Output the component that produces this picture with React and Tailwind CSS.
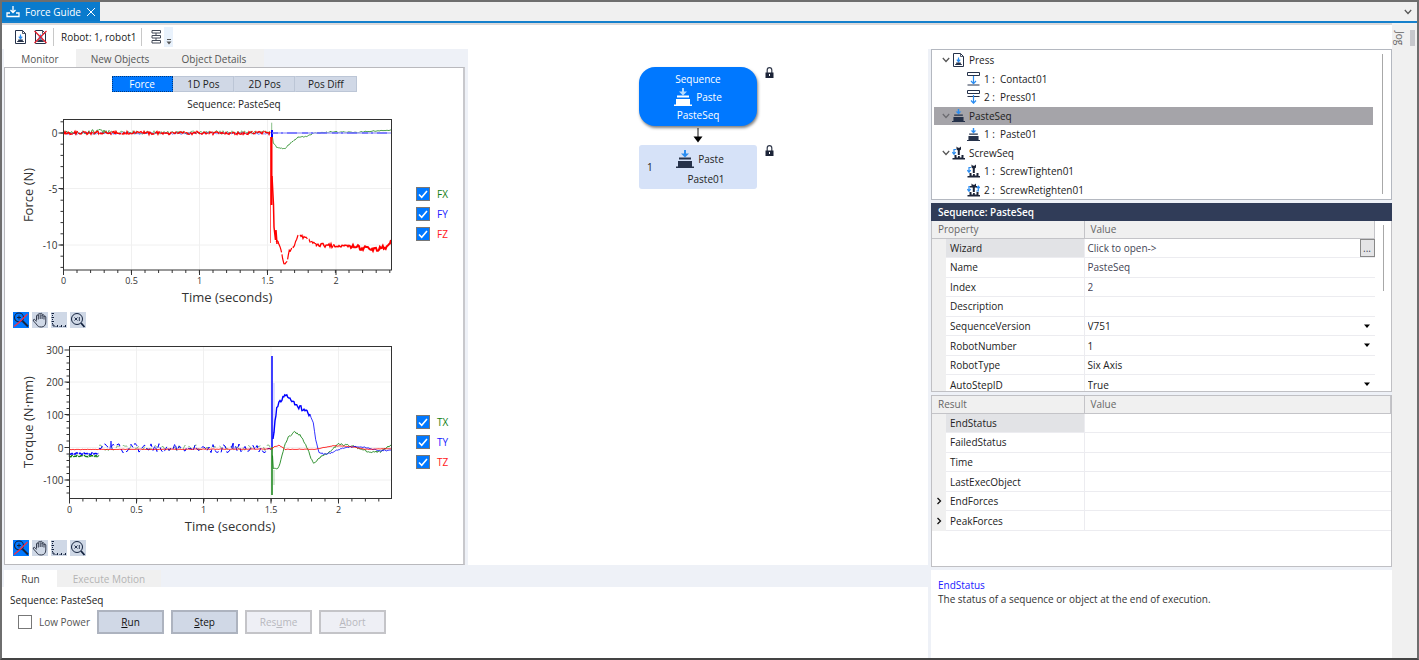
import React, { useState } from "react";

/* ---------- helpers for the charts ---------- */

function makeRandom(seed) {
  let s = seed;
  return () => {
    s = (s * 16807) % 2147483647;
    return s / 2147483647;
  };
}

function noise(x1, x2, y, amp, seed, step = 1) {
  const rnd = makeRandom(seed * 7919);
  const pts = [];
  for (let x = x1; x <= x2; x += step) pts.push(`${x},${(y + (rnd() * 2 - 1) * amp).toFixed(1)}`);
  return pts.join(" ");
}

function curve(anchors, amp, seed) {
  const rnd = makeRandom(seed * 7919);
  const pts = [];
  for (let i = 0; i < anchors.length - 1; i++) {
    const [xa, ya] = anchors[i];
    const [xb, yb] = anchors[i + 1];
    const n = Math.max(1, Math.round(Math.abs(xb - xa)));
    for (let k = 0; k < n; k++) {
      const t = k / n;
      pts.push(`${(xa + (xb - xa) * t).toFixed(1)},${(ya + (yb - ya) * t + (rnd() * 2 - 1) * amp).toFixed(1)}`);
    }
  }
  pts.push(anchors[anchors.length - 1].join(","));
  return pts.join(" ");
}

function Line({ points, color, width = 1, ...rest }) {
  return <polyline points={points} fill="none" stroke={color} strokeWidth={width} {...rest} />;
}

function range(from, to, step) {
  const out = [];
  for (let v = from; v <= to; v += step) out.push(v);
  return out;
}

function Axes({ left, right, top, bottom, xs, ys, minorX, minorY, title, titleX, unit, unitY }) {
  return (
    <g>
      <g stroke="#f0f0f0">
        {xs.slice(1).map((t) => <line key={t.label} x1={t.at} x2={t.at} y1={top} y2={bottom} />)}
        {ys.map((t) => <line key={t.label} x1={left} x2={right} y1={t.at} y2={t.at} />)}
      </g>
      <g stroke="#333">
        {xs.map((t) => <line key={t.label} x1={t.at} x2={t.at} y1={bottom} y2={bottom + 5} />)}
        {ys.map((t) => <line key={t.label} x1={left - 5} x2={left} y1={t.at} y2={t.at} />)}
        {minorX.map((x) => <line key={x} x1={x} x2={x} y1={bottom} y2={bottom + 3} />)}
        {minorY.map((y) => <line key={y} x1={left - 3} x2={left} y1={y} y2={y} />)}
      </g>
      <g fill="#333" fontSize="10">
        {xs.map((t) => <text key={t.label} x={t.at} y={bottom + 14} fontSize="9" textAnchor="middle">{t.label}</text>)}
        {ys.map((t) => <text key={t.label} x={left - 6} y={t.at + 4} textAnchor="end">{t.label}</text>)}
      </g>
      <text x={titleX} y={bottom + 32} fontSize="13" fill="#333" textAnchor="middle">{title}</text>
      <text transform={`translate(33 ${unitY}) rotate(-90)`} fontSize="13" fill="#333" textAnchor="middle">{unit}</text>
    </g>
  );
}

const RED = "#ff0000";
const BLUE = "#0000ff";
const GREEN = "#118011";

function ForceChart() {
  return (
    <svg viewBox="5 112 400 196" className="h-[196px] w-[400px] shrink-0" role="img" aria-label="Force over time">
      <Axes
        left={63.5} right={391.5} top={119.5} bottom={270}
        xs={[{ at: 63.5, label: "0" }, { at: 131.5, label: "0.5" }, { at: 199.5, label: "1" }, { at: 267.5, label: "1.5" }, { at: 336, label: "2" }]}
        ys={[{ at: 133, label: "0" }, { at: 188.5, label: "-5" }, { at: 245, label: "-10" }]}
        minorX={range(77, 391, 13.6)} minorY={range(121.8, 269, 11.2)}
        title="Time (seconds)" titleX={227} unit="Force (N)" unitY={195}
      />
      <Line points={noise(64, 110, 132, 2.6, 7)} color={GREEN} opacity="0.7" />
      <Line points={noise(110, 270, 132.5, 1.8, 8)} color={GREEN} opacity="0.5" />
      <Line points={noise(64, 270, 133.3, 1.2, 19)} color={BLUE} opacity="0.4" />
      <Line points={noise(64, 270, 133, 1.6, 31)} color={RED} width={1.4} strokeDasharray="9 1 5 1" />
      <Line points="271.7,122.7 271.7,140" color={GREEN} opacity="0.5" />
      <Line
        points={curve([[272, 134], [273.3, 143.3], [276.7, 147], [284.3, 149], [291, 142.7], [298, 137], [306.7, 136.7], [315, 132.7], [332, 132], [355, 132.5], [380, 130.7], [391, 129.7]], 0.6, 5)}
        color={GREEN} opacity="0.75"
      />
      <Line points="272,130 272,137" color={BLUE} width={2} />
      <Line points="272,133 391,133" color="#a9a9ff" width={1.6} />
      <Line points="272,133 391,133" color={BLUE} opacity="0.65" strokeDasharray="6 3 2 4 10 5" />
      <Line points="270.5,137 270.5,243" color={RED} opacity="0.65" />
      <Line points="271.5,137 271.5,205" color={RED} width={2} />
      <Line points="272,176 273.5,205 274,227 275.5,240 276,230 277,244" color={RED} width={1.5} />
      <Line
        points={curve([[276, 241], [280, 245.5], [282.7, 260], [285, 265], [287.3, 260], [289.3, 250], [293.3, 247], [296.7, 238.3], [300, 235], [304, 237.5], [310, 241.7], [316.7, 245]], 1.8, 11)}
        color={RED} width={1.2} strokeDasharray="14 2"
      />
      <Line points={curve([[316, 245], [333, 246]], 2.2, 13)} color={RED} width={1.5} />
      <Line points={curve([[333, 246], [350, 246]], 1, 17)} color={RED} width={1.5} />
      <Line points={curve([[350, 246], [363, 248.3], [377, 249.3], [386.7, 247], [391, 240]], 2.2, 23)} color={RED} width={2} />
      <rect x="63.5" y="119.5" width="328" height="150.5" fill="none" stroke="#333" />
    </svg>
  );
}

function TorqueChart() {
  return (
    <svg viewBox="5 340 400 196" className="h-[196px] w-[400px] shrink-0" role="img" aria-label="Torque over time">
      <Axes
        left={69.5} right={391.5} top={346.5} bottom={498.5}
        xs={[{ at: 69.5, label: "0" }, { at: 136.5, label: "0.5" }, { at: 203.5, label: "1" }, { at: 271, label: "1.5" }, { at: 338.5, label: "2" }]}
        ys={[{ at: 350, label: "300" }, { at: 382, label: "200" }, { at: 414.5, label: "100" }, { at: 447.5, label: "0" }, { at: 480, label: "-100" }]}
        minorX={range(82.9, 392, 13.45)} minorY={range(356.5, 498, 6.5)}
        title="Time (seconds)" titleX={230} unit="Torque (N·mm)" unitY={422}
      />
      <Line points={noise(69, 99, 456, 0.8, 3)} color={GREEN} width={1.4} strokeDasharray="5 1" />
      <Line points={noise(99, 271, 448, 3, 17, 2)} color={GREEN} opacity="0.5" strokeDasharray="5 4" />
      <Line points={noise(69, 99, 453.5, 1, 9)} color={BLUE} width={1.4} strokeDasharray="5 1" />
      <Line points={noise(99, 271, 448, 4.8, 41, 2)} color={BLUE} strokeDasharray="5 3" />
      <Line points="110,449 111,441 112,449" color={BLUE} opacity="0.7" />
      <Line points="232,449 233,443 234,449" color={BLUE} opacity="0.7" />
      <Line points="274,383 274,433" color={BLUE} opacity="0.25" />
      <Line points="274,470 274,485" color={GREEN} opacity="0.35" />
      <Line points="272,447 272,495" color={GREEN} width={1.5} />
      <Line points="272,356 272,447" color={BLUE} width={1.5} />
      <Line
        points={curve([[272.5, 455], [273.3, 468], [277.7, 469], [281, 460], [284.3, 446.7], [288.3, 437.3], [294.3, 432.3], [300, 435], [306.7, 446.7], [311, 458.3], [313.7, 463], [320, 457.3], [328.3, 453], [338.3, 444], [351.7, 446], [368.3, 451.7], [380, 451.7], [391, 445]], 0.9, 29)}
        color={GREEN} opacity="0.85"
      />
      <Line points={curve([[273, 440], [275, 420], [276.7, 408], [280, 401], [285.7, 394.5], [291, 398.3], [296.7, 405], [305, 410.7], [310, 414]], 2.4, 37)} color={BLUE} width={1.4} />
      <Line
        points={curve([[310, 414], [313.3, 423.3], [315.7, 440], [319, 451.7], [323.3, 454], [331.7, 452.7], [341.7, 448.3], [355, 446.7], [365, 447.3], [378.3, 450.7], [391, 450]], 0.8, 43)}
        color={BLUE} opacity="0.8"
      />
      <Line
        points={curve([[69, 449.5], [271, 449], [275, 446.5], [279, 445.3], [285, 449.3], [315, 449.3], [333, 445.7], [351.7, 446.7], [365, 449.3], [391, 448.7]], 0.3, 53)}
        color={RED} opacity="0.8"
      />
      <rect x="69.5" y="346.5" width="322" height="152" fill="none" stroke="#333" />
    </svg>
  );
}

/* ---------- icons ---------- */

const INK = "#26324a";
const SKY = "#2a8cf0";

function DocIcon({ crossed }) {
  return (
    <svg viewBox="0 0 13 14" className="h-[14px] w-[13px] shrink-0" fill="none">
      <path d="M1.500 .5h7l3 3v10h-10z" fill="#fff" stroke={INK} />
      <path d="M8.500 .5v3h3" stroke={INK} strokeWidth=".8" />
      <path d="M6.500 4.500v3.500M4.800 6.700l1.700 2 1.700-2" stroke={SKY} strokeWidth="1.200" />
      <path d="M4.200 9.500h4.600v1.500h1v1H3.200v-1h1z" fill={INK} />
      {crossed && <path d="M.5 1l12 12M12.500 1L.5 13" stroke="#e0202e" strokeWidth="1.300" />}
    </svg>
  );
}

function PasteIcon({ body = INK, arrow = SKY, className = "h-[13px] w-[13px]" }) {
  return (
    <svg viewBox="0 0 18 18" className={`${className} shrink-0`}>
      <path d="M8 0h2v3.500h3L9 7.500 5 3.500h3z" fill={arrow} />
      <path d="M3 7.500h12v2H3zM2 11h14v5.500h2V18H0v-1.500h2z" fill={body} />
    </svg>
  );
}

function ContactIcon({ pressing }) {
  return (
    <svg viewBox="0 0 13 14" className="h-[14px] w-[13px] shrink-0" fill="none">
      <path d="M.5 .5h12v3H.5z" stroke={INK} />
      {pressing ? <path d="M.5 6.500h12" stroke={INK} /> : <path d="M.5 13h12" stroke={INK} />}
      <path d={pressing ? "M6.500 5v8M4 10.500l2.500 2.700L9 10.500" : "M6.500 4v7.500M4 9l2.500 2.700L9 9"} stroke={SKY} strokeWidth="1.200" />
    </svg>
  );
}

function ScrewIcon({ again }) {
  return (
    <svg viewBox="0 0 13 14" className="h-[14px] w-[13px] shrink-0" fill="none">
      <path d="M4.500 .5l1.500 1.200h1.500L9 .5v3L7.800 4.500V9H5.800V4.500L4.500 3.500z" fill="#1c2438" />
      <path d="M2.500 9h2v2.500h1.500V10h1.800v1.500h1.700V9h2v3H13V13.500H.5V12h2z" fill="#1c2438" />
      <path d="M4 3.500H2v4.500M.3 6.200L2 8.300l1.700-2.100" stroke={SKY} strokeWidth="1.200" />
      {again && <path d="M9.300 8h2V3.500M9.700 5.200l1.600-2 1.600 2" stroke={SKY} strokeWidth="1.200" />}
      {again && <path d="M3 3h7v1.500H3z" fill="#1c2438" />}
    </svg>
  );
}

function LockIcon() {
  return (
    <svg viewBox="0 0 9 12" className="h-[12px] w-[9px]" fill="none">
      <path d="M2.200 6V3a2.300 2.300 0 0 1 4.600 0v3" stroke="#333b4d" strokeWidth="1.200" />
      <rect x=".5" y="5.500" width="8" height="5.500" fill="#1c2438" />
      <path d="M4.500 7v2" stroke="#fff" />
    </svg>
  );
}

function Chevron({ muted }) {
  return (
    <svg viewBox="0 0 8 6" className="h-[6px] w-[8px]" fill="none">
      <path d="M.8 1l3.200 3.500L7.200 1" stroke={muted ? "#6b6b70" : "#555"} strokeWidth="1.200" />
    </svg>
  );
}

const toolIcons = {
  Zoom: (
    <>
      <circle cx="6" cy="5.500" r="4.500" stroke="#14233f" strokeWidth="1.100" />
      <path d="M6 3.500v4M4 5.500h4" stroke="#14233f" />
      <path d="M9.500 9l5.500 5.500" stroke="#14233f" strokeWidth="2" />
      <path d="M1 14.500L6 10.500 14.500 2" stroke="#f0304a" strokeWidth="1.300" />
    </>
  ),
  Pan: (
    <path
      d="M4.500 8.500V4c0-1.300 1.800-1.300 1.800 0V2.500c0-1.300 1.900-1.300 1.900 0v-.3c0-1.300 1.900-1.300 1.900 0V3.500c0-1.200 1.900-1.200 1.900 0V5c0-1.200 1.800-1.200 1.800 0v5c0 3-1.700 5-4.500 5-2.600 0-4-1-5-3L1.500 9c-.8-1.500.8-2.200 1.600-1.200l1.400 1.700M6.300 4v3.500M8.200 3v4M10.100 3v4M12 4.500v3"
      stroke="#333b4d"
    />
  ),
  "Reset axes": (
    <path d="M.5 1.500h2.500M.5 5.500h2.500M.5 9.500h2.500M1 13h2v2M6.500 13v2M10.500 13v2M14.500 13v2M1.500 3v1M1.500 7v1M1.500 11v1M4.500 14.500h1M8.500 14.500h1M12.500 14.500h1" stroke="#14233f" />
  ),
  "Actual size": (
    <>
      <circle cx="7" cy="7" r="5.500" stroke="#14233f" />
      <path d="M4.500 5.500l3 3M7.500 5.500l-3 3M9.300 5v4" stroke="#14233f" strokeWidth=".9" />
      <path d="M11 11l3.500 4" stroke="#14233f" strokeWidth="1.800" />
    </>
  ),
};

/* ---------- small parts ---------- */

function Check({ id, label, color, defaultChecked = true }) {
  return (
    <div className="flex h-5 items-center gap-[7px]">
      <span className="grid h-[14px] w-[14px]">
        <input
          id={id}
          type="checkbox"
          defaultChecked={defaultChecked}
          className="peer col-start-1 row-start-1 h-[14px] w-[14px] appearance-none border border-[#777] bg-white checked:bg-[#0078ff]"
        />
        <svg viewBox="0 0 14 14" className="pointer-events-none invisible col-start-1 row-start-1 peer-checked:visible" fill="none">
          <path d="M3 7.500l2.700 2.700L11 4" stroke="#fff" strokeWidth="1.600" />
        </svg>
      </span>
      <label htmlFor={id} className={color}>{label}</label>
    </div>
  );
}

function ChartBlock({ name, chart, channels }) {
  return (
    <section aria-label={name}>
      <div className="flex items-center">
        {chart}
        <div className="ml-[11px] flex flex-col pt-2">
          {channels.map((c) => (
            <Check key={c} id={c} label={c} color={c[1] === "X" ? "text-[#118011]" : c[1] === "Y" ? "text-[#2020ff]" : "text-[#ff2020]"} />
          ))}
        </div>
      </div>
      <div className="mt-1 ml-2 flex gap-[3px]">
        {Object.entries(toolIcons).map(([tool, art], i) => (
          <button key={tool} aria-label={tool} className={`h-4 w-4 ${i === 0 ? "bg-[#0078ff]" : "bg-[#cfd8e6]"}`}>
            <svg viewBox="0 0 16 16" className="h-4 w-4" fill="none">{art}</svg>
          </button>
        ))}
      </div>
    </section>
  );
}

function LeftPane() {
  const [view, setView] = useState("Force");
  return (
    <div className="flex w-[466px] shrink-0 flex-col bg-[#eef1f7] pr-[3px] pl-[2px]">
      <div role="tablist" className="flex h-[18px] text-[#555]">
        <button role="tab" aria-selected="true" className="w-[72px] bg-white pt-[2px]">Monitor</button>
        <button role="tab" aria-selected="false" className="w-[88px] bg-[#f0f0f0] pt-[2px]">New Objects</button>
        <button role="tab" aria-selected="false" className="w-[100px] bg-[#f0f0f0] pt-[2px]">Object Details</button>
      </div>
      <div className="border border-r-2 border-[#b9b9bd] border-r-[#c8c8cc] bg-white pb-2">
        <div className="mx-auto mt-2 flex w-[245px]">
          {["Force", "1D Pos", "2D Pos", "Pos Diff"].map((v) => (
            <button
              key={v}
              onClick={() => setView(v)}
              className={`h-4 flex-1 border leading-none ${v === view ? "border-dotted border-[#003a80] bg-[#0078ff] text-white" : "border-[#bcc6d6] border-l-transparent bg-[#d0d8e6] text-[#222]"}`}
            >
              {v}
            </button>
          ))}
        </div>
        <p className="h-5 pt-1 text-center leading-4">Sequence: PasteSeq</p>
        <ChartBlock name="Force" chart={<ForceChart />} channels={["FX", "FY", "FZ"]} />
        <div className="h-3" />
        <ChartBlock name="Torque" chart={<TorqueChart />} channels={["TX", "TY", "TZ"]} />
      </div>
    </div>
  );
}

function FlowCanvas() {
  return (
    <div className="flex flex-1 flex-col items-center bg-white pt-[18px]">
      <div className="relative">
        <div className="flex h-[59px] w-[118px] flex-col items-center justify-center rounded-2xl bg-[#0078ff] text-white shadow-[1px_2px_3px_rgba(0,0,0,0.5)]">
          <span className="leading-[18px]">Sequence</span>
          <span className="flex h-[18px] items-center gap-1">
            <PasteIcon body="#fff" arrow="#b5dcff" className="h-[18px] w-[18px]" />
            Paste
          </span>
          <span className="leading-[18px]">PasteSeq</span>
        </div>
        <span className="absolute top-0 left-full ml-2"><LockIcon /></span>
      </div>
      <svg viewBox="0 0 10 15" className="my-0.5 h-[15px] w-[10px]">
        <path d="M5 0v10" stroke="#111" />
        <path d="M.5 8.500h9L5 14.500z" fill="#000" />
      </svg>
      <div className="relative">
        <div className="flex h-[44px] w-[118px] items-center rounded-[3px] bg-[#d6e2f8] pl-2 text-[#222]">
          <span className="w-2">1</span>
          <div className="flex flex-1 flex-col items-center pt-1">
            <span className="flex h-5 items-center gap-1 pr-3">
              <PasteIcon className="h-[18px] w-[18px]" />
              Paste
            </span>
            <span className="leading-5">Paste01</span>
          </div>
        </div>
        <span className="absolute top-0 left-full ml-2"><LockIcon /></span>
      </div>
    </div>
  );
}

function RunPane() {
  const btn = "h-6 w-[67px] border-2";
  const on = "border-[#adb3bf] bg-[#d0d8e6] text-[#111]";
  const off = "border-[#c4c4c8] bg-[#eeeff5] text-[#b8b8be]";
  return (
    <div className="flex flex-1 flex-col">
      <div role="tablist" className="flex h-[22px] items-end bg-[#eef1f7] pl-[2px]">
        <button role="tab" aria-selected="true" className="h-[17px] w-[53px] bg-white text-[#444]">Run</button>
        <button role="tab" aria-selected="false" disabled className="h-[17px] w-[104px] bg-[#f0f0f0] text-[#b4b4b4]">Execute Motion</button>
      </div>
      <div className="flex-1 bg-white pt-[5px] pl-2">
        <p className="leading-4">Sequence: PasteSeq</p>
        <div className="mt-[2px] flex items-center gap-[7px] pl-2">
          <Check id="low-power" label="Low Power" color="text-[#555]" defaultChecked={false} />
          <button className={`${btn} ${on}`}><u>R</u>un</button>
          <button className={`${btn} ${on}`}><u>S</u>tep</button>
          <button disabled className={`${btn} ${off}`}>Res<u>u</u>me</button>
          <button disabled className={`${btn} ${off}`}><u>A</u>bort</button>
        </div>
      </div>
    </div>
  );
}

const treeRows = [
  { icon: <DocIcon />, name: "Press" },
  { icon: <ContactIcon />, no: "1 :", name: "Contact01" },
  { icon: <ContactIcon pressing />, no: "2 :", name: "Press01" },
  { icon: <PasteIcon />, name: "PasteSeq", selected: true },
  { icon: <PasteIcon />, no: "1 :", name: "Paste01" },
  { icon: <ScrewIcon />, name: "ScrewSeq" },
  { icon: <ScrewIcon />, no: "1 :", name: "ScrewTighten01" },
  { icon: <ScrewIcon again />, no: "2 :", name: "ScrewRetighten01" },
];

function Tree() {
  return (
    <div className="flex h-[151px] border border-[#b4b8c0] bg-white pt-px pl-[2px]">
      <ul role="tree" className="flex flex-1 flex-col">
        {treeRows.map((r) => (
          <li
            key={r.name}
            role="treeitem"
            aria-selected={!!r.selected}
            className={`flex flex-1 items-center ${r.no ? "pl-[33px]" : "pl-2"} ${r.selected ? "bg-[#a5a4a9]" : ""}`}
          >
            {!r.no && <button aria-label={`Collapse ${r.name}`} className="mr-[2px]"><Chevron muted={r.selected} /></button>}
            {r.icon}
            {r.no && <span className="ml-1 w-4 whitespace-nowrap">{r.no}</span>}
            <span className={r.no ? "" : "ml-1"}>{r.name}</span>
          </li>
        ))}
      </ul>
      <div className="w-4 px-[9px] pt-[3px]"><div className="h-[140px] w-px bg-[#a8a8a8]" /></div>
    </div>
  );
}

const properties = [
  { name: "Wizard", value: "Click to open->", kind: "wizard" },
  { name: "Name", value: "PasteSeq", kind: "input" },
  { name: "Index", value: "2", kind: "input" },
  { name: "Description", value: "", kind: "input" },
  { name: "SequenceVersion", value: "V751", kind: "select" },
  { name: "RobotNumber", value: "1", kind: "select" },
  { name: "RobotType", value: "Six Axis", kind: "text" },
  { name: "AutoStepID", value: "True", kind: "select" },
];

function PropertyValue({ row }) {
  if (row.kind === "wizard")
    return (
      <div className="flex items-center justify-between text-[#445]">
        {row.value}
        <button aria-label="Open wizard" className="h-[18px] w-[15px] border border-[#888] bg-[#e4e4e6] leading-none">...</button>
      </div>
    );
  if (row.kind === "input")
    return <input id={row.name} defaultValue={row.value} className="block w-full bg-transparent text-[#445] outline-none" />;
  if (row.kind === "select")
    return (
      <div className="flex items-center pr-1">
        <select id={row.name} className="flex-1 appearance-none bg-transparent outline-none"><option>{row.value}</option></select>
        <svg viewBox="0 0 8 5" className="h-[5px] w-[8px]"><path d="M1 0.500h6L4 4z" fill="#000" /></svg>
      </div>
    );
  return row.value;
}

function Head({ left, right }) {
  return (
    <thead>
      <tr className="h-[17px] border-b border-[#c4c4c8] bg-[#f0f0f0] text-left text-[#666]">
        <th colSpan={2} className="w-[152px] border-r border-[#c4c4c8] p-0 pl-[6px] font-normal">{left}</th>
        <th className="border-r border-[#c4c4c8] p-0 pl-[6px] font-normal">{right}</th>
      </tr>
    </thead>
  );
}

const results = ["EndStatus", "FailedStatus", "Time", "LastExecObject", "EndForces", "PeakForces"];

function RightPane() {
  return (
    <div className="flex w-[464px] shrink-0 flex-col bg-[#eef1f7] pl-[3px]">
      <Tree />
      <h2 className="mt-[3px] h-[18px] bg-[#303c58] pl-[7px] leading-[18px] font-semibold text-white">Sequence: PasteSeq</h2>
      <div className="flex h-[171px] overflow-hidden border border-t-0 border-[#c0c0c4] bg-white">
        <table className="h-[174px] flex-1 table-fixed border-collapse">
          <colgroup><col className="w-[14px]" /><col className="w-[138px]" /><col /></colgroup>
          <Head left="Property" right="Value" />
          <tbody>
            {properties.map((r, i) => (
              <tr key={r.name}>
                <td className="h-[19px] bg-[#f0f0f0] p-0" />
                <td className={`border-r border-b border-[#ececf0] p-0 pl-1 ${i === 0 ? "bg-[#e2e3e6]" : ""}`}>
                  {r.kind === "input" || r.kind === "select" ? <label htmlFor={r.name}>{r.name}</label> : r.name}
                </td>
                <td className="border-b border-[#ececf0] p-0 pl-[3px]"><PropertyValue row={r} /></td>
              </tr>
            ))}
          </tbody>
        </table>
        <div className="w-[14px] px-2 pt-1"><div className="h-[66px] w-px bg-[#a8a8a8]" /></div>
      </div>
      <div className="mt-[3px] h-[172px] border border-[#c0c0c4] bg-white">
        <table className="h-[135px] w-full table-fixed border-collapse">
          <colgroup><col className="w-[14px]" /><col className="w-[138px]" /><col /></colgroup>
          <Head left="Result" right="Value" />
          <tbody>
            {results.map((name, i) => (
              <tr key={name}>
                <td className="h-[19px] bg-[#f0f0f0] p-0">
                  {i > 3 && (
                    <button aria-label={`Expand ${name}`} className="ml-1 block">
                      <svg viewBox="0 0 6 8" className="h-2 w-[6px]" fill="none"><path d="M1.500 1L4.500 4l-3 3" stroke="#111" strokeWidth="1.300" /></svg>
                    </button>
                  )}
                </td>
                <td className={`border-r border-b border-[#ececf0] p-0 pl-1 ${i === 0 ? "bg-[#e2e3e6]" : ""}`}>{name}</td>
                <td className="border-b border-[#ececf0] p-0" />
              </tr>
            ))}
          </tbody>
        </table>
      </div>
      <div className="mt-[3px] flex-1 bg-white pt-2 pl-[7px] leading-[14px]">
        <p className="text-[#2020ff]">EndStatus</p>
        <p className="text-[#333]">The status of a sequence or object at the end of execution.</p>
      </div>
    </div>
  );
}

export default function App() {
  return (
    <div className="flex min-h-screen flex-col border-2 border-[#6e6e6e] border-b-[#444] bg-[#f0f0f0] font-['Open_Sans','Noto_Sans',sans-serif] text-[10px] leading-4 text-[#222]">
      <header className="flex h-[21px] items-center justify-between border-b-2 border-[#1580cc]">
        <div className="flex h-full w-[98px] items-center bg-[#0a7bcd] pt-px pl-1 text-white">
          <svg viewBox="0 0 14 12" className="h-3 w-[14px]" fill="none">
            <path d="M7 0v6M4.500 4L7 6.500 9.500 4" stroke="#fff" strokeWidth="1.300" />
            <path d="M4 7H1v3.500h12V7h-3" stroke="#fff" strokeWidth="1.300" />
          </svg>
          <span className="ml-[5px] flex-1 whitespace-nowrap">Force Guide</span>
          <button aria-label="Close tab" className="mr-1">
            <svg viewBox="0 0 10 10" className="h-[10px] w-[10px]" fill="none"><path d="M1 1l8 8M9 1L1 9" stroke="#fff" /></svg>
          </button>
        </div>
        <button aria-label="Window list" className="mr-[5px]"><Chevron /></button>
      </header>
      <div className="flex flex-1">
        <main className="flex flex-1 flex-col">
          <div role="toolbar" className="flex h-[26px] items-center border-t-2 border-[#dcdadb] bg-white pl-3">
            <button aria-label="Load sequence"><DocIcon /></button>
            <button aria-label="Remove sequence" className="ml-[7px]"><DocIcon crossed /></button>
            <span className="ml-[6px] h-[18px] w-px bg-[#c8c8c8]" />
            <span className="ml-[7px] w-[80px] whitespace-nowrap">Robot: 1, robot1</span>
            <span className="h-[18px] w-px bg-[#c8c8c8]" />
            <button aria-label="Flow layout" className="ml-2">
              <svg viewBox="0 0 12 14" className="h-[14px] w-[12px]" fill="none" stroke="#444b58">
                <path d="M2 .5h8.500v2.500H2zM2 5.500h8.500v2.500H2zM2 10.500h8.500V13H2zM6 3v2.500M6 8v2.500" />
              </svg>
            </button>
            <button aria-label="More tools" className="ml-[2px] flex h-5 w-[9px] items-end justify-center bg-[#e9f2fc] pb-[2px]">
              <svg viewBox="0 0 6 6" className="h-[6px] w-[6px]"><path d="M1 0.500h4" stroke="#555" /><path d="M.5 2.500h5L3 5.500z" fill="#555" /></svg>
            </button>
          </div>
          <div className="flex flex-1">
            <div className="flex flex-1 flex-col">
              <div className="flex">
                <LeftPane />
                <FlowCanvas />
              </div>
              <RunPane />
            </div>
            <RightPane />
          </div>
        </main>
        <aside className="flex w-[25px] justify-between pt-[7px]">
          <button className="h-4 w-4 [writing-mode:vertical-rl] text-[#666]">Jog</button>
          <span className="mr-[2px] h-4 w-[5px] bg-[#c6c7cc]" />
        </aside>
      </div>
    </div>
  );
}
